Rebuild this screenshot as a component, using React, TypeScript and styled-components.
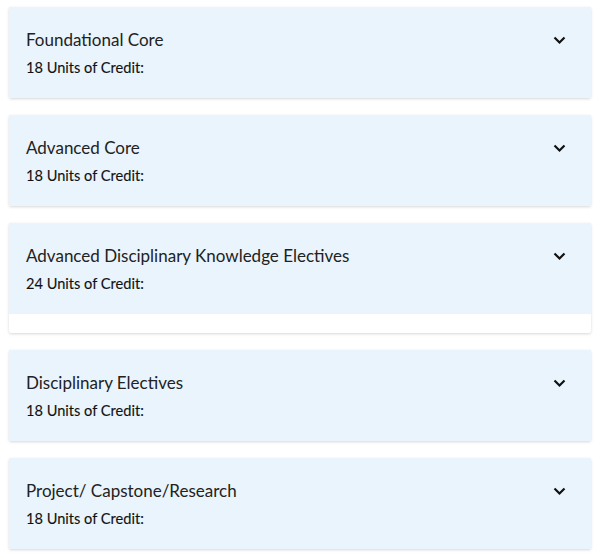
import { createGlobalStyle } from 'styled-components'
import styled from 'styled-components'

const GlobalStyle = createGlobalStyle`
  body {
    margin: 0;
    background: #fff;
    font-family: Lato, "Open Sans", sans-serif;
    color: #1d1d1d;
  }
`

const List = styled.div`
  display: flex;
  flex-direction: column;
  gap: 17px;
  padding: 7px 10px 6px 9px;
`

const Card = styled.section<{ $open?: boolean }>`
  background: #fff;
  border-radius: 2px;
  box-shadow: 0 1px 3px rgba(0, 0, 0, 0.16);
  padding-bottom: ${(p) => (p.$open ? '19px' : '0')};
`

const Header = styled.div`
  display: flex;
  justify-content: space-between;
  align-items: flex-start;
  height: 91px;
  box-sizing: border-box;
  padding: 22px 25px 0 17px;
  background: #e9f4fc;
`

const Titles = styled.div`
  display: flex;
  flex-direction: column;
  gap: 9px;
`

const Title = styled.div`
  font-size: 17px;
  line-height: 21px;
  color: #222;
`

const Credit = styled.div`
  font-size: 14.6px;
  line-height: 18px;
  font-weight: 400;
  -webkit-text-stroke: 0.12px #111;
  color: #111;
`

const Chevron = styled.svg`
  width: 13px;
  height: 9px;
  margin-top: 7px;
`

const groups = [
  { title: 'Foundational Core', units: 18 },
  { title: 'Advanced Core', units: 18 },
  { title: 'Advanced Disciplinary Knowledge Electives', units: 24, open: true },
  { title: 'Disciplinary Electives', units: 18 },
  { title: 'Project/ Capstone/Research', units: 18 },
]

export default function App() {
  return (
    <>
      <GlobalStyle />
      <List>
        {groups.map((g) => (
          <Card key={g.title} $open={g.open}>
            <Header>
              <Titles>
                <Title>{g.title}</Title>
                <Credit>{g.units} Units of Credit:</Credit>
              </Titles>
              <Chevron viewBox="0 0 13 9">
                <path d="M1.5 1.5 L6.5 6.5 L11.5 1.5" fill="none" stroke="#111" strokeWidth="2.2" />
              </Chevron>
            </Header>
          </Card>
        ))}
      </List>
    </>
  )
}
